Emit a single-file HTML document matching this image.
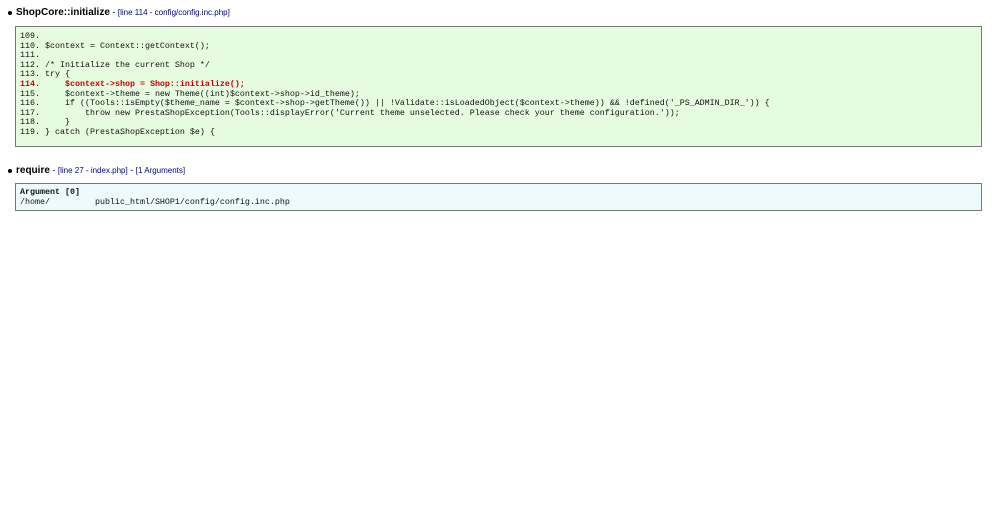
<!DOCTYPE html>
<html><head><style>
body{margin:0;background:#fff;font-family:"Liberation Sans",sans-serif;}
.h{position:absolute;left:8px;font-size:9px;color:#000;}
.h b{font-size:10px;}
.h span{color:#000080;font-size:8px;}
.dot{display:inline-block;width:4px;height:4px;border-radius:50%;background:#000;margin-right:4px;vertical-align:middle;}
pre{position:absolute;margin:0;font-family:"Liberation Mono",monospace;font-size:8.33px;line-height:9.6px;color:#111;box-sizing:border-box;border:1px solid #777;}
.g{left:15px;top:26px;width:967px;height:121px;background:#e6fce0;padding:5px 0 0 4px;}
.b{left:15px;top:183px;width:967px;height:28px;background:#eefbfc;padding:4px 0 0 4px;}
.r{color:#c00;font-weight:bold;}
</style></head><body>
<div class="h" style="top:7px"><span class="dot"></span><b>ShopCore::initialize</b> - <span>[line 114 - config/config.inc.php]</span></div>
<pre class="g">109.
110. $context = Context::getContext();
111.
112. /* Initialize the current Shop */
113. try {
<span class="r">114.     $context->shop = Shop::initialize();</span>
115.     $context->theme = new Theme((int)$context->shop->id_theme);
116.     if ((Tools::isEmpty($theme_name = $context->shop->getTheme()) || !Validate::isLoadedObject($context->theme)) && !defined('_PS_ADMIN_DIR_')) {
117.         throw new PrestaShopException(Tools::displayError('Current theme unselected. Please check your theme configuration.'));
118.     }
119. } catch (PrestaShopException $e) {</pre>
<div class="h" style="top:165px"><span class="dot"></span><b>require</b> - <span>[line 27 - index.php]</span> - <span>[1 Arguments]</span></div>
<pre class="b"><b>Argument [0]</b>
/home/         public_html/SHOP1/config/config.inc.php</pre>
</body></html>
